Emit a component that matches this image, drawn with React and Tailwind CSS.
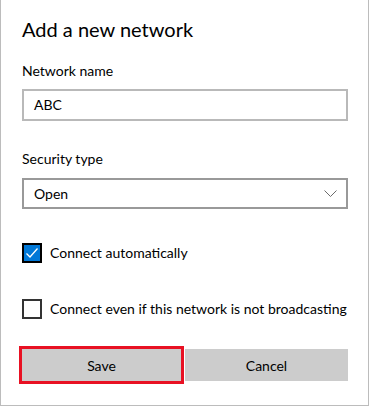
export default function App() {
  const font = { fontFamily: 'Lato, "Open Sans", sans-serif' };
  return (
    <div
      className="w-[369px] h-[406px] bg-white border-x border-b border-[#bcbcbc] pl-[21px] pr-[20px] text-black"
      style={font}
    >
      <div className="pt-[15px] text-[20px] leading-[28px] whitespace-nowrap">Add a new network</div>
      <div className="mt-[18px] text-[14px] leading-[20px]">Network name</div>
      <div className="mt-[8px] h-[32px] border-2 border-[#b9b9b9] px-[10px] text-[14px] leading-[28px]">ABC</div>
      <div className="mt-[28px] text-[14px] leading-[20px]">Security type</div>
      <div className="mt-[9px] h-[31px] border-2 border-[#999999] pl-[10px] pr-[9px] text-[14px] leading-[27px] flex items-center justify-between">
        <span>Open</span>
        <svg width="13" height="8" viewBox="0 0 13 8" fill="none">
          <path d="M0.5 0.5 L6.5 6.5 L12.5 0.5" stroke="#6b6b6b" strokeWidth="1" />
        </svg>
      </div>
      <div className="mt-[34px] flex items-center h-[20px]">
        <div className="w-[20px] h-[20px] border-2 border-black bg-[#0078d7] flex items-center justify-center">
          <svg width="16" height="16" viewBox="0 0 16 16" fill="none">
            <path d="M2.5 8.5 L6 12 L13.5 3.5" stroke="white" strokeWidth="1.3" />
          </svg>
        </div>
        <span className="ml-[8px] text-[14px] leading-[20px] whitespace-nowrap">Connect automatically</span>
      </div>
      <div className="mt-[36px] flex items-center h-[20px]">
        <div className="w-[20px] h-[20px] border-2 border-[#333333] bg-white" />
        <span className="ml-[8px] text-[14px] leading-[20px] whitespace-nowrap">Connect even if this network is not broadcasting</span>
      </div>
      <div className="mt-[30px] grid grid-cols-[159px_163px] gap-[4px]">
        <button className="h-[32px] bg-[#cccccc] outline-[3px] outline-solid outline-[#e81123] text-[14px]">Save</button>
        <button className="h-[32px] bg-[#cccccc] text-[14px]">Cancel</button>
      </div>
    </div>
  );
}
